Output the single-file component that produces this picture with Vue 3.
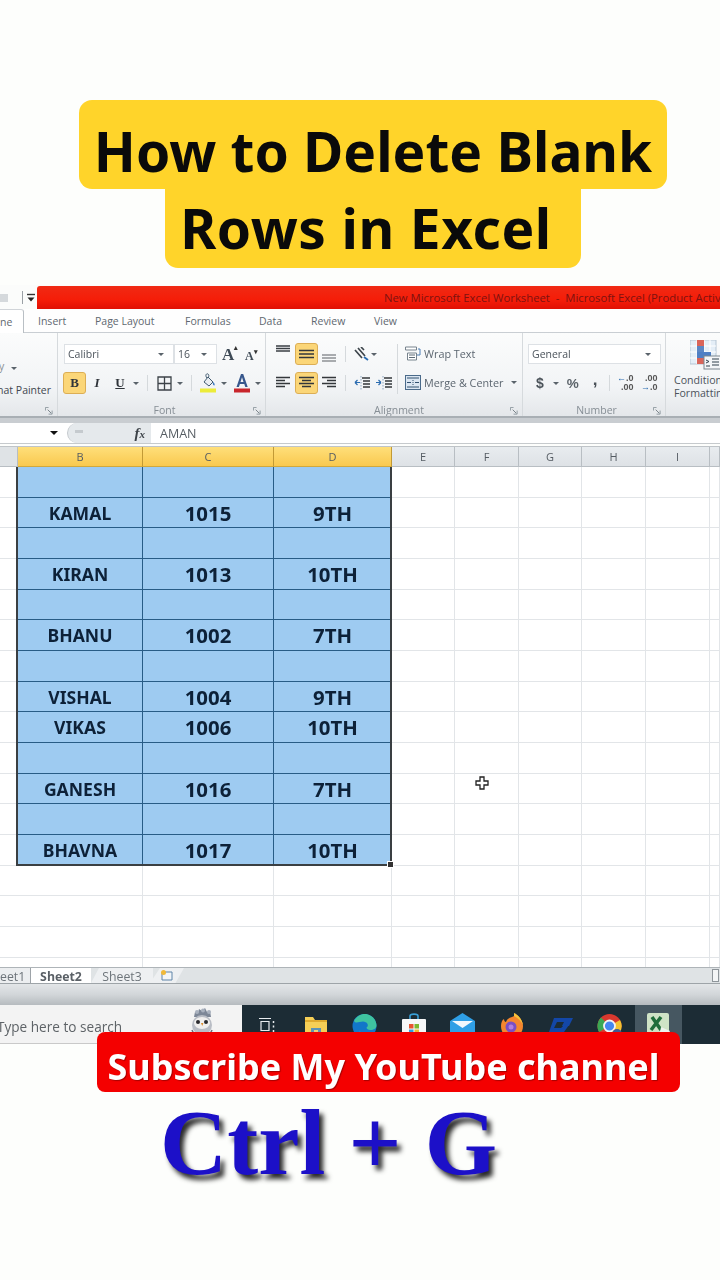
<template>
  <div class="page">
    <div class="title">
      <div class="title-line first">How to Delete Blank</div>
      <div class="title-line second">Rows in Excel</div>
    </div>

    <div class="excel">
      <div class="titlebar">
        <div class="qat">
          <span class="qat-grey"></span>
          <span class="qat-sep"></span>
          <svg width="10" height="10" viewBox="0 0 10 10"><path d="M1 1.500h8" stroke="#333" stroke-width="1.400"/><path d="M1.500 4.500h7L5 8.500z" fill="#222"/></svg>
        </div>
        <div class="redbar">New Microsoft Excel Worksheet &nbsp;-&nbsp; Microsoft Excel (Product Activation Failed)</div>
      </div>

      <div class="tabs">
        <span class="tab-home">ne</span>
        <span class="tab" v-for="t in tabs" :key="t.name" :style="{ width: t.w + 'px' }">{{ t.name }}</span>
      </div>

      <div class="ribbon">
        <section class="group clip">
          <div class="clip-body">
            <span class="clip-drop">y <i class="caret"></i></span>
            <span class="clip-text">Format Painter</span>
          </div>
          <div class="group-label"><span></span><svg class="launcher" width="8" height="8" viewBox="0 0 9 9"><path d="M.5 4V.5H4M8 4v4H4" fill="none" stroke="#8a949c"/><path d="M3 3l4 4" stroke="#6d7880"/></svg></div>
        </section>

        <section class="group font">
          <div class="tool-row top">
            <div class="combo name">Calibri<i class="caret"></i></div>
            <div class="combo size">16<i class="caret"></i></div>
            <span class="grow-a big">A<b>▴</b></span>
            <span class="grow-a small">A<b>▾</b></span>
          </div>
          <div class="tool-row bottom">
            <span class="btn active serif-b">B</span>
            <span class="btn plain serif-i">I</span>
            <span class="btn plain serif-u">U</span>
            <i class="caret c-u"></i>
            <span class="sep s-u"></span>
            <svg width="15" height="15" viewBox="0 0 15 15"><path d="M1 1h13v13H1zM7.500 1v13M1 7.500h13" fill="none" stroke="#3c4248" stroke-width="1.300"/></svg>
            <i class="caret c-b"></i>
            <span class="sep s-b"></span>
            <svg width="17" height="20" viewBox="0 0 17 20"><path d="M4 9l4-5 5 5-4 4z" fill="#e9edf2" stroke="#40596f"/><path d="M7 5C5 3 6 0 8 1c1 .5 1 2 .5 3" fill="none" stroke="#40596f"/><path d="M13 9c1.500 1 2 2.500 1.500 3.500C13 12.500 12.500 11 13 9z" fill="#3c7bc0"/><rect x="0" y="15.500" width="16" height="4" fill="#ecec3a"/></svg>
            <i class="caret c-f"></i>
            <svg class="ink" width="16" height="20" viewBox="0 0 16 20"><path d="M2.500 14L7 1h2.200l4.500 13h-2.400l-1-3H5.900l-1 3zM6.500 9h3L8 4.300z" fill="#37578c"/><rect x="0" y="15.500" width="16" height="4" fill="#c8262c"/></svg>
            <i class="caret c-i"></i>
          </div>
          <div class="group-label"><span>Font</span><svg class="launcher" width="8" height="8" viewBox="0 0 9 9"><path d="M.5 4V.5H4M8 4v4H4" fill="none" stroke="#8a949c"/><path d="M3 3l4 4" stroke="#6d7880"/></svg></div>
        </section>

        <section class="group align">
          <div class="align-body">
            <div class="align-icons">
              <div class="tool-row top tight">
                <span class="lines first-line"><svg width="14" height="20" viewBox="0 0 14 20"><path d="M0 2h14M0 4.500h14M0 7h14" stroke="#3a3f44" stroke-width="1.300"/></svg></span>
                <span class="lines active"><svg width="15" height="12" viewBox="0 0 15 12"><path d="M0 2.500h15M0 6h15M0 9.500h15" stroke="#33373b" stroke-width="1.400"/></svg></span>
                <span class="lines last-line"><svg width="14" height="20" viewBox="0 0 14 20"><path d="M0 11h14M0 14h14M0 17h14" stroke="#5a5f64" stroke-width="1.200"/></svg></span>
                <span class="sep s-a"></span>
                <svg width="15" height="14" viewBox="0 0 15 14"><path d="M1 3l7 8M4 1l7 8M7 0l3 3" stroke="#3e464c" stroke-width="1.700"/><path d="M10 10l4 3" stroke="#2b6cb0" stroke-width="1.800"/></svg>
                <i class="caret c-o"></i>
              </div>
              <div class="tool-row bottom tight">
                <span class="lines first-line"><svg width="14" height="14" viewBox="0 0 14 14"><path d="M0 1.500h14M0 4.500h9M0 7.500h14M0 10.500h9" stroke="#33373b" stroke-width="1.300"/></svg></span>
                <span class="lines active"><svg width="15" height="14" viewBox="0 0 15 14"><path d="M0 1.500h15M3 4.500h9M0 7.500h15M3 10.500h9" stroke="#33373b" stroke-width="1.300"/></svg></span>
                <span class="lines last-line"><svg width="14" height="14" viewBox="0 0 14 14"><path d="M0 1.500h14M5 4.500h9M0 7.500h14M5 10.500h9" stroke="#33373b" stroke-width="1.300"/></svg></span>
                <span class="sep s-a"></span>
                <svg width="16" height="15" viewBox="0 0 16 15"><path d="M8 2h8M9 5h7M9 8h7M9 11h7" stroke="#33373b" stroke-width="1.300"/><path d="M6 6.500H1M1 6.500l2.500-2.500M1 6.500L3.500 9" stroke="#2b6cb0" stroke-width="1.200" fill="none"/><path d="M7 0v15" stroke="#8ba5c0" stroke-dasharray="1.500 1.500"/></svg>
                <svg class="ind" width="16" height="15" viewBox="0 0 16 15"><path d="M8 2h8M9 5h7M9 8h7M9 11h7" stroke="#33373b" stroke-width="1.300"/><path d="M0 6.500h5M5 6.500L2.500 4M5 6.500L2.500 9" stroke="#2b6cb0" stroke-width="1.200" fill="none"/><path d="M7 0v15" stroke="#8ba5c0" stroke-dasharray="1.500 1.500"/></svg>
              </div>
            </div>
            <span class="sep tall"></span>
            <div class="wrap-col">
              <div class="wrap-line">
                <svg width="16" height="16" viewBox="0 0 16 16"><path d="M.5 1h11v3H.5z" fill="#fff" stroke="#77838d"/><path d="M2.500 7h9v7h-9z" fill="#fff" stroke="#77838d"/><path d="M4 9h6M4 11.500h6" stroke="#5c6a75"/><path d="M13 3h2v6h-3" fill="none" stroke="#4b7db3"/></svg>
                <span>Wrap Text</span>
              </div>
              <div class="wrap-line">
                <svg width="16" height="15" viewBox="0 0 16 15"><rect x=".5" y=".5" width="15" height="14" fill="#dbe6f2" stroke="#4a6a8a"/><path d="M2 7.500h4M14 7.500h-4M2 3h12M2 12h12" stroke="#31506f"/><path d="M8 5v5" stroke="#31506f" stroke-dasharray="1 1"/></svg>
                <span>Merge &amp; Center</span><i class="caret c-m"></i>
              </div>
            </div>
          </div>
          <div class="group-label"><span>Alignment</span><svg class="launcher" width="8" height="8" viewBox="0 0 9 9"><path d="M.5 4V.5H4M8 4v4H4" fill="none" stroke="#8a949c"/><path d="M3 3l4 4" stroke="#6d7880"/></svg></div>
        </section>

        <section class="group number">
          <div class="tool-row top">
            <div class="combo general">General<i class="caret"></i></div>
          </div>
          <div class="tool-row bottom num-tools">
            <b class="dollar">$</b><i class="caret c-d"></i>
            <b class="percent">%</b>
            <b class="comma">,</b>
            <span class="sep s-n"></span>
            <span class="dec"><em><u>←</u>.0</em><em>.00</em></span>
            <span class="dec"><em>.00</em><em><u>→</u>.0</em></span>
          </div>
          <div class="group-label"><span>Number</span><svg class="launcher" width="8" height="8" viewBox="0 0 9 9"><path d="M.5 4V.5H4M8 4v4H4" fill="none" stroke="#8a949c"/><path d="M3 3l4 4" stroke="#6d7880"/></svg></div>
        </section>

        <section class="styles">
          <svg class="cond" width="32" height="30" viewBox="0 0 32 30">
            <rect x="0" y="0" width="26" height="24" fill="#e4eef7" stroke="#b5c5d3"/>
            <path d="M7 0v24M14 0v24M20 0v24M0 6h26M0 12h26M0 18h26" stroke="#fff"/>
            <rect x="7" y="0" width="7" height="6" fill="#d9655a"/>
            <rect x="7" y="6" width="7" height="6" fill="#5b86c4"/>
            <rect x="7" y="12" width="14" height="6" fill="#4f7fc4"/>
            <rect x="7" y="18" width="7" height="6" fill="#d9655a"/>
            <rect x="14" y="16" width="17" height="13" fill="#f4f6f8" stroke="#7c8790"/>
            <path d="M16 20l3 1.500-3 1.500M16 26h4M22 19h7M22 22h7M22 25h7" fill="none" stroke="#31404c"/>
          </svg>
          <span class="cond-text">Conditional<br>Formatting</span>
        </section>
      </div>
      <div class="ribbon-edge"></div>

      <div class="formula">
        <div class="namebox"><i class="caret dark"></i></div>
        <div class="pill">
          <span class="pill-mark"></span>
          <span class="fx">f<small>x</small></span>
        </div>
        <div class="fvalue">AMAN</div>
      </div>

      <div class="sheet">
        <div class="grid">
          <div class="head corner"></div>
          <div v-for="c in columns" :key="c.name" class="head" :class="{ picked: c.picked }">{{ c.name }}</div>
          <template v-for="(row, i) in rows" :key="i">
            <div class="cell rowhead"></div>
            <div class="cell sel name-cell">{{ row[0] }}</div>
            <div class="cell sel num-cell">{{ row[1] }}</div>
            <div class="cell sel num-cell">{{ row[2] }}</div>
            <div v-for="n in 6" :key="n" class="cell"></div>
          </template>
          <template v-for="i in 4" :key="'e' + i">
            <div class="cell rowhead"></div>
            <div v-for="n in 9" :key="n" class="cell"></div>
          </template>
        </div>
        <div class="selection"><span class="handle"></span></div>
        <svg class="cursor" width="14" height="14" viewBox="0 0 14 14"><path d="M5 1h4v4h4v4H9v4H5V9H1V5h4z" fill="#fff" stroke="#222" stroke-width="1.300"/></svg>
      </div>

      <div class="sheettabs">
        <span class="stab first-tab">eet1</span>
        <span class="stab active">Sheet2</span>
        <span class="stab third">Sheet3</span>
        <span class="stab newtab">
          <svg width="14" height="13" viewBox="0 0 14 13"><path d="M2 3h10v8H2z" fill="#f2f5f8" stroke="#5f84a8"/><circle cx="3.500" cy="3.500" r="2.500" fill="#f0b93a"/></svg>
        </span>
        <span class="thumb"></span>
      </div>
      <div class="status"></div>

      <div class="taskbar">
        <div class="search">
          <span>Type here to search</span>
          <svg class="owl" width="26" height="26" viewBox="0 0 26 26">
            <path d="M5 9l1-5 3 1 1-4 3 2 3-3 2 4 3-1 1 6z" fill="#7d8797"/>
            <circle cx="8" cy="4" r="2" fill="#a9b1be"/><circle cx="14" cy="2.500" r="2" fill="#a9b1be"/><circle cx="20" cy="4" r="2" fill="#a9b1be"/>
            <ellipse cx="13" cy="17" rx="10" ry="10" fill="#b9bdc5"/>
            <ellipse cx="13" cy="15" rx="8" ry="6" fill="#f0efee"/>
            <circle cx="9" cy="14" r="2" fill="#2a2a2e"/><circle cx="17" cy="14" r="2" fill="#2a2a2e"/>
            <path d="M12 15h2.400l-1.200 3z" fill="#d98b2a"/>
            <path d="M3 22c1 3 3 4 4 4M23 22c-1 3-3 4-4 4" stroke="#6d7480" stroke-width="1.500" fill="none"/>
          </svg>
        </div>
        <div class="apps">
          <div class="slot lower">
            <svg width="17" height="18" viewBox="0 0 17 18"><path d="M3 4.500h8v9H3zM1 1.500h12M1 16.500h12" fill="none" stroke="#e8ecef" stroke-width="1.200"/><path d="M15.500 4v2M15.500 8.500v2M15.500 13v2" stroke="#e8ecef" stroke-width="1.500"/></svg>
          </div>
          <div class="slot lower">
            <svg width="22" height="24" viewBox="0 0 22 24"><path d="M0 0h8l2 3h12v21H0z" fill="#f6cf56"/><path d="M0 3h22v2H0z" fill="#e0ab2e"/><rect x="6" y="11" width="10" height="9" fill="#5d93b5"/><rect x="9" y="13" width="4" height="2" fill="#e9d27a"/></svg>
          </div>
          <div class="slot">
            <svg width="25" height="26" viewBox="0 0 25 26"><circle cx="12.500" cy="13" r="12" fill="#1277c9"/><path d="M2 8C5 2 11 0 16 1.500c5 1.500 8.500 6 8.500 11 0 3-3 4.500-6 4.500-2.500 0-4-1-4-2.500 3-2 .5-6-3.500-6C7 8.500 4 11 2 8z" fill="#3fc3a0"/><path d="M7 17c2 4 7 7 14 4-4 4-10 4-14-4z" fill="#5ad0ee"/></svg>
          </div>
          <div class="slot">
            <svg width="24" height="26" viewBox="0 0 24 26"><path d="M8 7V3c0-2.500 8-2.500 8 0v4" fill="none" stroke="#3aa0d8" stroke-width="1.600"/><rect x="0" y="6" width="24" height="20" rx="1" fill="#f6f7f8"/><rect x="7" y="11" width="4.500" height="4.500" fill="#e8542f"/><rect x="12.500" y="11" width="4.500" height="4.500" fill="#7cb82f"/><rect x="7" y="16.500" width="4.500" height="4.500" fill="#2d9fe0"/><rect x="12.500" y="16.500" width="4.500" height="4.500" fill="#f4b92e"/></svg>
          </div>
          <div class="slot">
            <svg width="25" height="26" viewBox="0 0 25 26"><path d="M0 8L12.500 0 25 8v18H0z" fill="#2f9fe6"/><path d="M2 8h21l-10.500 7z" fill="#f1f8fd"/></svg>
          </div>
          <div class="slot">
            <svg width="24" height="26" viewBox="0 0 24 26"><path d="M12 4c3-1 3-2 2-4 5 2 9 8 9 13 0 7-5 12-11 12S1 20 1 13c0-3 1-6 3-7 0 2 1 3 2 3 1-3 3-4 6-5z" fill="#f5862e"/><path d="M14 0c4 2 8 6 9 12-2-4-5-7-9-9z" fill="#f5c23a"/><circle cx="11" cy="14" r="5.500" fill="#7a4fc4"/><circle cx="11" cy="14" r="2.500" fill="#b07ee0"/></svg>
          </div>
          <div class="slot lower">
            <svg width="24" height="16" viewBox="0 0 24 16"><path d="M5 1h19l-4 8h-7l2-4H8L5 11h7l3-3h5l-5 7H0z" fill="#1347a8"/></svg>
          </div>
          <div class="slot">
            <svg width="25" height="26" viewBox="0 0 25 26"><circle cx="12.500" cy="13" r="12" fill="#d9382e"/><path d="M12.500 13L2 19A12 12 0 0 1 4 4.500z" fill="#3ba853"/><path d="M12.500 13L23 7A12 12 0 0 1 10 24.700z" fill="#f4c231"/><circle cx="12.500" cy="13" r="5.500" fill="#4587f0" stroke="#f3f3f3" stroke-width="1.800"/><circle cx="20" cy="21" r="5" fill="#3f5a92"/></svg>
          </div>
          <div class="slot tile">
            <svg width="23" height="26" viewBox="0 0 23 26"><rect x="0" y="0" width="22" height="24" rx="2" fill="#cfe3c6"/><path d="M5 4l9 13M14 4L4 17" stroke="#1f6e3a" stroke-width="3.500"/><path d="M14 14l9 4-2 4-8-3z" fill="#eef3ee"/></svg>
          </div>
        </div>
      </div>
    </div>

    <div class="subscribe">Subscribe My YouTube channel</div>
    <div class="shortcut">Ctrl + G</div>
  </div>
</template>

<script setup>
const tabs = [
  { name: 'Insert', w: 57 },
  { name: 'Page Layout', w: 90 },
  { name: 'Formulas', w: 74 },
  { name: 'Data', w: 52 },
  { name: 'Review', w: 63 },
  { name: 'View', w: 60 }
]

const columns = [
  { name: 'B', picked: true },
  { name: 'C', picked: true },
  { name: 'D', picked: true },
  { name: 'E' },
  { name: 'F' },
  { name: 'G' },
  { name: 'H' },
  { name: 'I' },
  { name: '' }
]

const rows = [
  ['', '', ''],
  ['KAMAL', '1015', '9TH'],
  ['', '', ''],
  ['KIRAN', '1013', '10TH'],
  ['', '', ''],
  ['BHANU', '1002', '7TH'],
  ['', '', ''],
  ['VISHAL', '1004', '9TH'],
  ['VIKAS', '1006', '10TH'],
  ['', '', ''],
  ['GANESH', '1016', '7TH'],
  ['', '', ''],
  ['BHAVNA', '1017', '10TH']
]
</script>

<style>
html, body { background: #fdfefc; overflow: hidden; }
</style>

<style scoped>
.page {
  width: 720px;
  height: 1280px;
  padding-top: 100px;
  box-sizing: border-box;
  overflow: hidden;
  background: #fdfefc;
  font-family: "Noto Sans", sans-serif;
}

.title {
  width: 588px;
  margin-left: 79px;
  display: flex;
  flex-direction: column;
  align-items: center;
}
.title-line {
  background: #ffd42a;
  color: #0a0a0a;
  font-weight: 700;
  font-size: 55px;
  white-space: nowrap;
  text-align: center;
  border-radius: 13px;
}
.title-line.first { width: 588px; height: 89px; line-height: 102px; }
.title-line.second { width: 416px; height: 79px; line-height: 78px; padding-right: 14px; letter-spacing: 0.6px; box-sizing: border-box; border-radius: 0 0 13px 13px; }

.excel {
  margin-top: 17px;
  font-family: "Open Sans", sans-serif;
  color: #5c6670;
  filter: blur(0.35px);
}
svg { flex: none; }

.titlebar {
  height: 24px;
  display: flex;
  background: #fbfcfb;
}
.qat {
  width: 37px;
  display: flex;
  align-items: center;
  padding-top: 1px;
  flex: none;
}
.qat-grey { width: 8px; height: 8px; background: #d5d9dc; margin-right: 14px; }
.qat-sep { width: 1px; height: 13px; background: #9aa0a5; margin-right: 3px; }
.redbar {
  flex: 1;
  margin-top: 1px;
  border-top-left-radius: 3px;
  background: linear-gradient(#f02a14, #f51d08 60%, #e01004);
  color: #7d1210;
  font-size: 11.3px;
  line-height: 24px;
  padding-left: 347px;
  white-space: nowrap;
  overflow: hidden;
}

.tabs {
  height: 24px;
  display: flex;
  align-items: center;
  font-size: 10.5px;
  background: #fefefe;
  border-bottom: 1px solid #c9ced3;
  box-sizing: border-box;
  color: #5f6870;
  padding-top: 1px;
}
.tab-home {
  width: 24px;
  height: 24px;
  box-sizing: border-box;
  line-height: 24px;
  background: #fff;
  border-right: 1px solid #b9bfc4;
  border-top: 1px solid #d0d4d8;
  flex: none;
  margin-right: 14px;
  border-top-right-radius: 3px;
}
.tab { flex: none; white-space: nowrap; }

.ribbon {
  height: 85px;
  display: flex;
  background: linear-gradient(#fbfcfc, #f2f4f6 65%, #e4e7ea);
  border-bottom: 2px solid #a9afb4;
  box-sizing: border-box;
  overflow: hidden;
}
.group {
  flex: none;
  display: flex;
  flex-direction: column;
  border-right: 1px solid #d6dadd;
  box-sizing: border-box;
  position: relative;
}
.clip { width: 58px; }
.font { width: 208px; padding-left: 6px; }
.align { width: 257px; padding-left: 10px; }
.number { width: 143px; padding-left: 5px; }

.group-label {
  margin-top: auto;
  height: 12px;
  display: flex;
  justify-content: center;
  align-items: center;
  font-size: 10.5px;
  color: #868e95;
  line-height: 12px;
}
.launcher { position: absolute; right: 4px; bottom: 1px; }

.clip-body {
  display: flex;
  flex-direction: column;
  align-items: flex-end;
  padding: 26px 6px 0 0;
  gap: 10px;
  white-space: nowrap;
  font-size: 10.5px;
  height: 70px;
  box-sizing: border-box;
  overflow: hidden;
  color: #3f474f;
}
.clip-drop { width: 58px; margin-right: -6px; color: #8a9096; }
.clip-text { flex: none; }

.tool-row { display: flex; align-items: center; }
.tool-row.top { margin-top: 11px; height: 20px; }
.tool-row.bottom { margin-top: 8px; height: 22px; }

.combo {
  height: 20px;
  line-height: 19px;
  font-size: 10.5px;
  border: 1px solid #dde1e5;
  background: #fff;
  box-sizing: border-box;
  padding-left: 3px;
  display: flex;
  align-items: center;
  justify-content: space-between;
  padding-right: 5px;
  color: #4b535b;
}
.combo.name { width: 110px; }
.combo.size { width: 43px; margin-right: 5px; }
.combo.general { width: 133px; }

.caret {
  display: inline-block;
  flex: none;
  width: 0;
  height: 0;
  border: 3px solid transparent;
  border-top: 3px solid #5a636b;
  border-bottom: 0;
  margin: 0 4px;
}
.caret.dark { border-top-color: #111; border-width: 4px; border-bottom: 0; }

.grow-a {
  font-family: "Liberation Serif", serif;
  font-weight: 700;
  color: #3e4a56;
  display: inline-flex;
  align-items: flex-start;
  line-height: 1;
}
.grow-a b { font-size: 7px; margin-top: -1px; color: #333; }
.grow-a.big { font-size: 17px; width: 22px; }
.grow-a.small { font-size: 12px; margin-left: 1px; margin-top: 3px; }

.btn {
  flex: none;
  display: inline-flex;
  align-items: center;
  justify-content: center;
  height: 22px;
  font-family: "Liberation Serif", serif;
  font-size: 13px;
  color: #2f343a;
}
.btn.active {
  width: 23px;
  margin-left: -1px;
  background: #fbd678;
  border: 1px solid #dcae55;
  border-radius: 3px;
  box-sizing: border-box;
}
.btn.plain { width: 22px; }
.btn.plain.serif-i { margin-right: 1px; }
.serif-b { font-weight: 700; }
.serif-i { font-style: italic; font-weight: 700; }
.serif-u { text-decoration: underline; font-weight: 700; }

.sep {
  width: 1px;
  height: 16px;
  background: #d5d9dc;
  flex: none;
}
.c-u { margin: 0 0 0 2px; }
.s-u { margin: 0 9px 0 8px; }
.c-b { margin: 0 0 0 5px; }
.s-b { margin: 0 8px 0 8px; }
.c-f { margin: 0 0 0 4px; }
.ink { margin-left: 7px; }
.c-i { margin: 0 0 0 5px; }

.s-a { margin: 0 8px 0 9px; }
.c-o { margin: 0 0 0 2px; }
.sep.tall { height: 50px; margin: 11px 7px 0 0; }

.align-body { display: flex; }
.align-icons { width: 121px; flex: none; }
.lines {
  flex: none;
  height: 22px;
  display: inline-flex;
  align-items: center;
  justify-content: center;
  box-sizing: border-box;
}
.first-line { width: 14px; margin-right: 5px; }
.last-line { width: 14px; margin-left: 4px; }
.lines.active {
  width: 23px;
  background: #fbd678;
  border: 1px solid #dcae55;
  border-radius: 3px;
}
.ind { margin-left: 6px; }

.wrap-col { padding-top: 6px; }
.wrap-line {
  display: flex;
  align-items: center;
  gap: 3px;
  height: 29px;
  font-size: 10.8px;
  white-space: nowrap;
}
.c-m { margin: 0 0 0 5px; }

.num-tools { padding-left: 8px; font-family: "Liberation Sans", sans-serif; color: #4a5259; }
.dollar { font-size: 14px; }
.c-d { margin: 0 0 0 9px; }
.percent { font-size: 13.5px; margin-left: 8px; margin-right: 14px; color: #5a6269; }
.comma { font-size: 17px; margin-top: -6px; }
.s-n { margin: 0 5px 0 11px; }
.dec {
  display: flex;
  flex-direction: column;
  font-size: 9px;
  line-height: 9px;
  font-weight: 700;
  margin-right: 5px;
  color: #555;
  width: 19px;
  text-align: right;
}
.dec em { font-style: normal; }
.dec u { text-decoration: none; color: #2b6cb0; }

.styles {
  flex: 1;
  padding: 7px 0 0 8px;
  display: flex;
  flex-direction: column;
  align-items: flex-start;
  white-space: nowrap;
  font-size: 10.6px;
  color: #4b535b;
  line-height: 13px;
}
.cond { margin-left: 16px; margin-bottom: 4px; }

.ribbon-edge {
  height: 5px;
  background: #c9cdd1;
}

.formula {
  height: 20px;
  display: flex;
  align-items: stretch;
  background: #fff;
  margin-bottom: 2px;
  border-bottom: 1px solid #c6cacd;
}
.namebox {
  width: 67px;
  display: flex;
  justify-content: flex-end;
  align-items: center;
  padding-right: 5px;
  box-sizing: border-box;
}
.pill {
  width: 84px;
  background: #e5e9ec;
  border-radius: 10px 0 0 10px;
  border-left: 1px solid #c5cace;
  display: flex;
  align-items: center;
  justify-content: space-between;
  padding: 0 6px 0 7px;
  box-sizing: border-box;
}
.pill-mark { width: 8px; height: 3px; background: #c5cace; margin-bottom: 4px; }
.fx {
  font-family: "Liberation Serif", serif;
  font-style: italic;
  font-weight: 700;
  font-size: 15px;
  color: #3c4248;
}
.fx small { font-size: 11px; }
.fvalue {
  padding-left: 9px;
  font-size: 12.5px;
  line-height: 21px;
  color: #555c62;
}

.sheet {
  height: 520px;
  overflow: hidden;
  position: relative;
  background: #fff;
  border-top: 1px solid #bfc4c8;
}
.grid {
  display: grid;
  grid-template-columns: 18px 125px 131px 118px 63px 64px 63px 64px 64px 10px;
  grid-template-rows: 20px;
  grid-auto-rows: 30.67px;
}
.head {
  background: linear-gradient(#e8ecef, #dee2e6);
  border-right: 1px solid #b8bec3;
  border-bottom: 1px solid #b8bec3;
  box-sizing: border-box;
  text-align: center;
  font-size: 11px;
  line-height: 20px;
  color: #555c63;
}
.head.corner { background: #dfe3e6; }
.head.picked {
  background: linear-gradient(#ffdf7a, #f9c94f);
  border-right-color: #c29a35;
  border-bottom-color: #d1a83c;
}
.cell {
  border-right: 1px solid #e2e5e8;
  border-bottom: 1px solid #e2e5e8;
  box-sizing: border-box;
  min-width: 0;
}
.cell.rowhead { border-right: 0; }
.cell.sel {
  background: #9ecbf1;
  border-right: 1px solid #285c86;
  border-bottom: 1.5px solid #285c86;
  text-align: center;
  font-weight: 700;
  color: #0d2138;
  font-family: "Noto Sans", sans-serif;
  white-space: nowrap;
  line-height: 30px;
}
.name-cell { font-size: 17.6px; }
.num-cell { font-size: 20.4px; }

.selection {
  position: absolute;
  left: 16px;
  top: 20px;
  width: 376px;
  height: 399px;
  border: 2px solid #3a3f42;
  border-top: 0;
  box-sizing: border-box;
  pointer-events: none;
}
.handle {
  position: absolute;
  right: -4px;
  bottom: -4px;
  width: 5px;
  height: 5px;
  background: #333;
  border: 1px solid #fff;
}
.cursor { position: absolute; left: 475px; top: 329px; }

.sheettabs {
  height: 17px;
  display: flex;
  align-items: stretch;
  background: #dfe3e5;
  border-top: 1px solid #aeb4b8;
  border-bottom: 1px solid #9ea4a8;
  box-sizing: border-box;
  font-size: 12.3px;
  position: relative;
}
.stab { line-height: 17px; flex: none; color: #6d747a; }
.first-tab { width: 31px; background: #eceef0; border-right: 1px solid #9da3a8; box-sizing: border-box; }
.stab.active { width: 60px; background: #fff; font-weight: 700; text-align: center; color: #5a6066; box-sizing: border-box; }
.third {
  width: 62px;
  text-align: center;
  background: #eef0f2;
  clip-path: polygon(8px 0, 100% 0, 100% 100%, 0 100%);
  box-sizing: border-box;
}
.newtab {
  width: 34px;
  background: #eef0f2;
  clip-path: polygon(10px 0, 100% 0, 75% 100%, 0 100%);
  display: flex;
  align-items: center;
  justify-content: center;
  margin-left: -3px;
}
.thumb {
  position: absolute;
  right: 1px;
  top: 1px;
  width: 7px;
  height: 13px;
  background: #f3f5f6;
  border: 1px solid #8e959a;
  box-sizing: border-box;
}

.status {
  height: 21px;
  background: linear-gradient(#e3e6e8, #d2d6d9 50%, #b6bbbf);
}

.taskbar {
  height: 39px;
  display: flex;
  background: #1c2c35;
}
.search {
  width: 242px;
  background: #f3f3f3;
  border-bottom: 1px solid #c9c9c9;
  box-sizing: border-box;
  flex: none;
  display: flex;
  color: #5e6367;
  font-size: 13.6px;
  white-space: nowrap;
  padding-top: 12px;
  overflow: hidden;
}
.search span { margin-left: -3px; width: 192px; flex: none; line-height: 19px; }
.owl { margin-top: -9px; }
.apps {
  flex: 1;
  display: flex;
  align-items: stretch;
}
.slot {
  width: 49px;
  flex: none;
  display: flex;
  justify-content: center;
  padding-top: 8px;
  box-sizing: border-box;
}
.slot.lower { padding-top: 12px; }
.tile {
  width: 47px;
  margin-left: 1px;
  background: #465761;
}

.subscribe {
  position: relative;
  width: 583px;
  height: 60px;
  margin: -12px 0 0 97px;
  background: #f40000;
  border-radius: 8px;
  color: #fff;
  font-size: 36px;
  font-weight: 700;
  line-height: 70px;
  text-align: center;
  white-space: nowrap;
  box-sizing: border-box;
  padding-right: 10px;
  text-shadow: 1px 1px 1px rgba(90, 0, 0, 0.5);
}

.shortcut {
  margin: 1px 0 0 160px;
  font-family: "Liberation Serif", serif;
  font-weight: 700;
  font-size: 93px;
  line-height: 100px;
  color: #1c10c8;
  text-shadow: 4px 5px 5px #2a2a2a;
  white-space: pre;
}
</style>
